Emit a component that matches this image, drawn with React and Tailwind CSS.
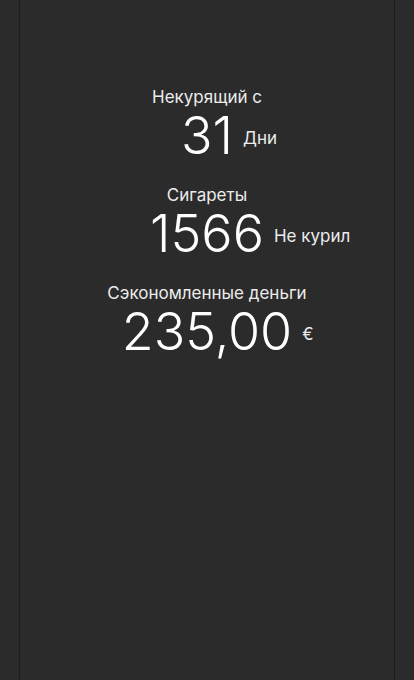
const stats = [
  { label: 'Некурящий с', value: '31', unit: 'Дни' },
  { label: 'Сигареты', value: '1566', unit: 'Не курил' },
  { label: 'Сэкономленные деньги', value: '235,00', unit: '€' },
];

const StatBlock = ({ label, value, unit, first }) => (
  <div className={first ? '' : 'mt-[25px]'}>
    <p className="text-center text-[17px] leading-[17px] font-normal text-[#ececec]">{label}</p>
    <div className="mt-[4px] grid grid-cols-[1fr_auto_1fr] items-end">
      <div />
      <span className="text-[52px] leading-[52px] font-light text-white">{value}</span>
      <span className="ml-[10px] mb-[15px] text-[17px] leading-[17px] font-normal text-[#ececec] whitespace-nowrap">
        {unit}
      </span>
    </div>
  </div>
);

const App = () => {
  return (
    <div className="h-[680px] bg-[#2b2b2b] px-[19px] font-['Inter','Noto_Sans',sans-serif]">
      <div className="h-full border-x border-[#1d1d1d] pt-[89px]">
        {stats.map((s, i) => (
          <StatBlock key={s.label} {...s} first={i === 0} />
        ))}
      </div>
    </div>
  );
};

export default App;
